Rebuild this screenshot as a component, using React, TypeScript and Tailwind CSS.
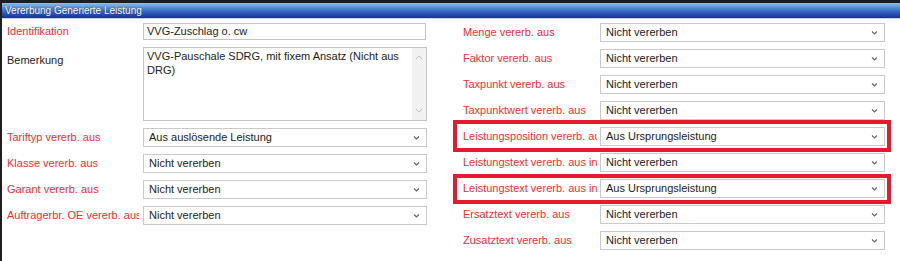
import React from "react";

const Chevron = () => (
  <svg
    width="7"
    height="5"
    viewBox="0 0 7 5"
    className="absolute right-[7px] top-1/2 -translate-y-1/2 pointer-events-none"
  >
    <path d="M1 1 L3.5 3.5 L6 1" fill="none" stroke="#666" strokeWidth="1.2" />
  </svg>
);

const SelectBox = ({ value, width }: { value: string; width: string }) => (
  <div className={`relative h-[19px] ${width}`}>
    <select
      defaultValue={value}
      className="block w-full h-[19px] appearance-none bg-white border border-[#c9c9c9] pl-[5px] pr-5 text-[11px] text-[#222] leading-none outline-none"
    >
      <option>{value}</option>
    </select>
    <Chevron />
  </div>
);

type Row = {
  label: string;
  value: string;
  mark?: "a" | "b";
};

const leftRows: Row[] = [
  { label: "Tariftyp vererb. aus", value: "Aus auslösende Leistung" },
  { label: "Klasse vererb. aus", value: "Nicht vererben" },
  { label: "Garant vererb. aus", value: "Nicht vererben" },
  { label: "Auftragerbr. OE vererb. aus", value: "Nicht vererben" },
];

const rightRows: Row[] = [
  { label: "Menge vererb. aus", value: "Nicht vererben" },
  { label: "Faktor vererb. aus", value: "Nicht vererben" },
  { label: "Taxpunkt vererb. aus", value: "Nicht vererben" },
  { label: "Taxpunktwert vererb. aus", value: "Nicht vererben" },
  { label: "Leistungsposition vererb. aus", value: "Aus Ursprungsleistung", mark: "a" },
  { label: "Leistungstext vererb. aus intern", value: "Nicht vererben" },
  { label: "Leistungstext vererb. aus intern", value: "Aus Ursprungsleistung", mark: "b" },
  { label: "Ersatztext vererb. aus", value: "Nicht vererben" },
  { label: "Zusatztext vererb. aus", value: "Nicht vererben" },
];

export default function App() {
  return (
    <div className="w-[900px] h-[261px] bg-white border-l-2 border-t-[3px] border-[#1e1e1e] overflow-hidden font-['Liberation_Sans',Arial,sans-serif]">
      {/* Title bar */}
      <div className="h-[16px] bg-gradient-to-b from-[#8cc2ee] via-[#3b6fc8] to-[#1a2e98] border-b border-[#c7d3ea] pl-[3px] text-[10px] leading-[15px] text-white [text-shadow:0_0_1px_#0a1a60]">
        Vererbung Generierte Leistung
      </div>

      <div className="flex">
        {/* Left column */}
        <div className="w-[448px] pl-[5px] pt-[4px] flex flex-col gap-[7px]">
          <div className="flex items-center h-[17px]">
            <span className="w-[136px] text-[11px] text-[#f32d2d] whitespace-nowrap">Identifikation</span>
            <div className="w-[283px] h-[17px] border border-[#c4c4c4] pl-[3px] text-[11px] leading-[15px] text-[#222]">
              VVG-Zuschlag o. cw
            </div>
          </div>

          <div className="flex items-start h-[74px]">
            <span className="w-[136px] pt-[5px] text-[11px] text-[#222] whitespace-nowrap">Bemerkung</span>
            <div className="w-[284px] h-[74px] border border-[#c4c4c4] flex">
              <div className="flex-1 pl-[3px] pt-[1px] text-[11px] leading-[14px] text-[#222]">
                VVG-Pauschale SDRG, mit fixem Ansatz (Nicht aus DRG)
              </div>
              <div className="w-[14px] bg-[#f1f1f1] flex flex-col justify-between items-center py-[7px]">
                <svg width="8" height="5" viewBox="0 0 8 5">
                  <path d="M1 4 L4 1 L7 4" fill="none" stroke="#c2c2c2" strokeWidth="1" />
                </svg>
                <svg width="8" height="5" viewBox="0 0 8 5">
                  <path d="M1 1 L4 4 L7 1" fill="none" stroke="#c2c2c2" strokeWidth="1" />
                </svg>
              </div>
            </div>
          </div>

          {leftRows.map((r) => (
            <div key={r.label} className="flex items-center h-[19px]">
              <span className="w-[132px] mr-[4px] overflow-hidden text-[11px] text-[#f32d2d] whitespace-nowrap">
                {r.label}
              </span>
              <SelectBox value={r.value} width="w-[284px]" />
            </div>
          ))}
        </div>

        {/* Right column */}
        <div className="pl-[13px] pt-[4px] flex flex-col gap-[7px]">
          {rightRows.map((r, i) => (
            <div key={i} className="relative w-[422px] flex items-center h-[19px]">
              {r.mark === "a" && (
                <span className="absolute -left-[10px] -right-[6px] -top-[7px] -bottom-[6px] border-[4px] border-[#e8192c] pointer-events-none" />
              )}
              {r.mark === "b" && (
                <span className="absolute -left-[10px] -right-[6px] -top-[5px] -bottom-[6px] border-[4px] border-[#e8192c] pointer-events-none" />
              )}
              <span className="w-[134px] mr-[3px] overflow-hidden text-[11px] text-[#f32d2d] whitespace-nowrap">
                {r.label}
              </span>
              <SelectBox value={r.value} width="w-[285px]" />
            </div>
          ))}
        </div>
      </div>
    </div>
  );
}
